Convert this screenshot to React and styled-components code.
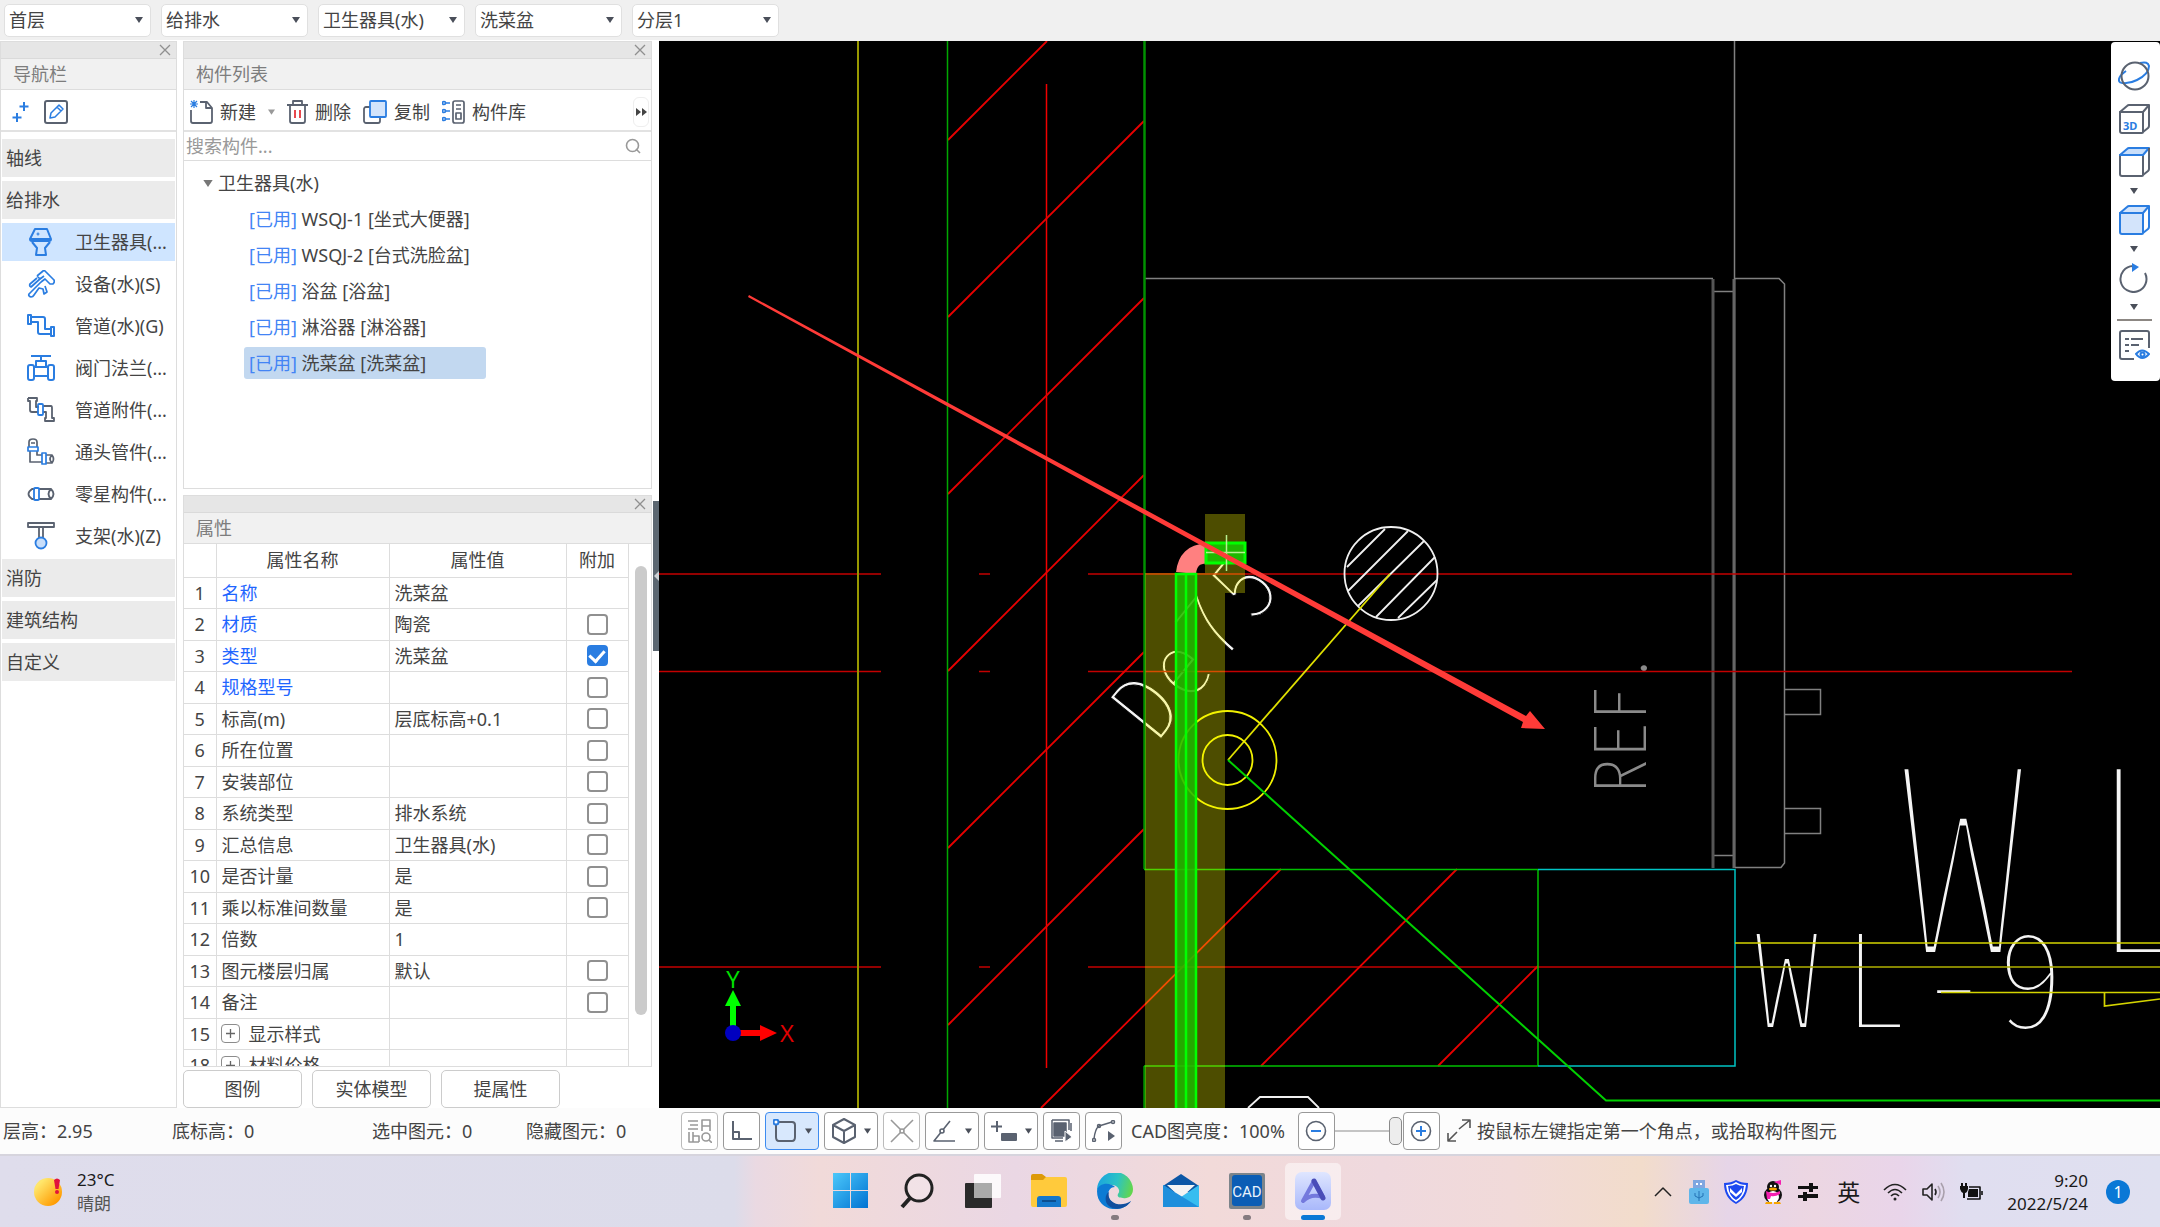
import React from "react";
import styled, { createGlobalStyle } from "styled-components";

const GlobalStyle = createGlobalStyle`
  * {
    box-sizing: border-box;
  }
  body {
    background-color: #fcfcfc;
    color: #444;
    font-family: "Noto Sans", "Noto Sans CJK SC", sans-serif;
    font-size: 18px;
    line-height: 24px;
    margin: 0;
    overflow: hidden;
  }
  button, input, select {
    color: inherit;
    font: inherit;
    margin: 0;
  }
  svg {
    display: block;
    flex: none;
  }
`;

const Page = styled.div`
  display: flex;
  flex-direction: column;
  height: 100vh;
`;

/* ---------- top bar ---------- */

const TopBar = styled.header`
  align-items: center;
  background-color: #f0f0f0;
  display: flex;
  flex: none;
  gap: 10px;
  height: 40px;
  padding: 0 4px;
`;

const SelectBox = styled.label`
  align-items: center;
  background-color: #fff;
  border: 1px solid #e0e0e0;
  border-radius: 5px;
  display: flex;
  height: 33px;
  padding-right: 7px;
  width: 147px;

  & select {
    appearance: none;
    background: none;
    border: 0;
    flex: 1;
    min-width: 0;
    outline: 0;
    padding: 0 4px;
  }
`;

/* ---------- docked panels ---------- */

const Main = styled.main`
  background-color: #fff;
  display: flex;
  flex: 1;
  min-height: 0;
`;

const PanelStack = styled.div`
  display: flex;
  flex: none;
  flex-direction: column;
  gap: 6px;
  margin-left: 6px;
  padding-top: 1px;
  width: 469px;
`;

const Panel = styled.section`
  border: 1px solid #ddd;
  display: flex;
  flex: ${(p) => p.$basis || "1 1 0"};
  flex-direction: column;
  min-height: 0;
`;

const NavPanel = styled(Panel)`
  flex: none;
  margin-top: 1px;
  width: 177px;
`;

const PanelStrip = styled.div`
  align-items: center;
  background-color: #e6e6e6;
  border-bottom: 1px solid #dadada;
  display: flex;
  flex: none;
  height: 17px;
  justify-content: flex-end;
  padding-right: 5px;
`;

const CloseButton = styled.button`
  background: none;
  border: 0;
  padding: 0;
`;

const PanelTitle = styled.h2`
  background-color: #f1f1f1;
  border-bottom: 1px solid #ddd;
  color: #7d7d7d;
  flex: none;
  font-size: 18px;
  font-weight: 400;
  line-height: 30px;
  margin: 0;
  padding-left: 12px;
`;

const PanelTools = styled.div`
  align-items: center;
  border-bottom: 2px solid #e2e2e2;
  display: flex;
  flex: none;
  gap: ${(p) => p.$gap}px;
  height: 42px;
  padding: 4px 2px 0 ${(p) => p.$left}px;
`;

const ToolButton = styled.button`
  align-items: center;
  background: none;
  border: 0;
  display: flex;
  gap: 7px;
  padding: 0;
`;

const MoreButton = styled(ToolButton)`
  border: 1px solid #eee;
  border-radius: 6px;
  height: 30px;
  justify-content: center;
  margin-left: auto;
  width: 16px;
`;

const NavList = styled.nav`
  display: flex;
  flex-direction: column;
  gap: 4px;
  padding: 7px 1px;
`;

const NavGroup = styled.button`
  background-color: #ebebeb;
  border: 0;
  height: 38px;
  padding: 0 4px;
  text-align: left;
`;

const NavItem = styled.button`
  align-items: center;
  background-color: ${(p) => (p.$active ? "#cfe5ff" : "#fff")};
  border: 0;
  display: flex;
  gap: 20px;
  height: 38px;
  padding: 0 0 0 25px;
  white-space: nowrap;
`;

const SearchBox = styled.label`
  align-items: center;
  border-bottom: 1px solid #ddd;
  display: flex;
  flex: none;
  height: 29px;
  padding-right: 10px;

  & input {
    background: none;
    border: 0;
    flex: 1;
    height: 26px;
    outline: 0;
    padding: 0 2px;
  }
  & input::placeholder {
    color: #999;
  }
`;

const Tree = styled.div`
  display: flex;
  flex-direction: column;
  gap: 4px;
  padding: 6px 60px 0 19px;
`;

const TreeRoot = styled.div`
  align-items: center;
  display: flex;
  gap: 5px;
  height: 32px;
`;

const TreeItem = styled.button`
  align-self: flex-start;
  background-color: ${(p) => (p.$active ? "#c2d8f0" : "transparent")};
  border: 0;
  border-radius: 3px;
  height: 32px;
  margin-left: 41px;
  min-width: ${(p) => (p.$active ? "242px" : "0")};
  padding: 0 5px;
  text-align: left;
  white-space: pre;

  & span {
    color: #4384f5;
  }
`;

/* ---------- property table ---------- */

const TableArea = styled.div`
  display: flex;
  flex: 1;
  min-height: 0;
  overflow: hidden;
`;

const PropTable = styled.table`
  border-collapse: collapse;
  height: min-content;
  table-layout: fixed;
  width: 444px;

  & th, & td {
    border-bottom: 1px solid #ddd;
    border-right: 1px solid #ddd;
    height: 31px;
    overflow: hidden;
    padding: 0 0 0 5px;
    text-align: left;
    white-space: nowrap;
  }
  & tbody tr:nth-child(even) td {
    height: 32px;
  }
  & thead th {
    font-weight: 400;
    height: 33px;
    padding: 0;
    text-align: center;
  }
  & td:first-child, & td:last-child {
    padding: 0;
    text-align: center;
  }
`;

const PropName = styled.div`
  align-items: center;
  color: ${(p) => (p.$blue ? "#1f66ff" : "inherit")};
  display: flex;
  gap: 9px;
`;

const ExpandButton = styled.button`
  align-items: center;
  background-color: #fff;
  border: 1px solid #8c8c8c;
  border-radius: 4px;
  display: flex;
  height: 19px;
  justify-content: center;
  margin-left: -1px;
  padding: 0;
  width: 19px;
`;

const CheckBox = styled.input`
  appearance: none;
  background-color: #fff;
  border: 2px solid #909090;
  border-radius: 4px;
  display: block;
  height: 21px;
  margin: 0 auto;
  width: 21px;

  &:checked {
    background-color: #2a7de1;
    border-color: #2a7de1;
  }
  &:checked::after {
    border: solid #fff;
    border-width: 0 3px 3px 0;
    content: "";
    display: block;
    height: 12px;
    margin: 0 auto;
    transform: rotate(42deg);
    width: 7px;
  }
`;

const ScrollTrack = styled.div`
  flex: 1;
  padding: 22px 0 51px 6px;
`;

const ScrollThumb = styled.div`
  background-color: #cbcbcb;
  border-radius: 6px;
  height: 100%;
  width: 12px;
`;

const ButtonRow = styled.div`
  display: flex;
  flex: none;
  gap: 10px;
  margin: -3px 0 0;
`;

const FlatButton = styled.button`
  background-color: #fff;
  border: 1px solid #ccc;
  border-radius: 5px;
  height: 38px;
  padding: 0;
  width: 119px;
`;

const Splitter = styled.div`
  flex: none;
  padding: 461px 0 0 1px;
  width: 7px;
`;

const SplitterGrip = styled.button`
  align-items: center;
  background-color: #5c6771;
  border: 0;
  display: flex;
  height: 150px;
  justify-content: flex-end;
  padding: 0;
  width: 6px;
`;

/* ---------- drawing area ---------- */

const CanvasArea = styled.div`
  background-color: #000;
  border-top: 1px solid #eee;
  flex: 1;
  min-width: 0;
  position: relative;
`;

const Drawing = styled.svg`
  height: 100%;
  left: 0;
  position: absolute;
  top: 0;
  width: 100%;
`;

const ViewBar = styled.div`
  align-items: center;
  background-color: #fff;
  border-radius: 4px;
  display: flex;
  flex-direction: column;
  gap: 13px;
  padding: 19px 3px 21px 0;
  position: absolute;
  right: 0;
  top: 1px;
  width: 49px;
`;

const ViewGroup = styled.div`
  align-items: center;
  display: flex;
  flex-direction: column;
  gap: 11px;
  margin-bottom: -2px;
`;

const IconButton = styled.button`
  background: none;
  border: 0;
  display: block;
  padding: 0;
`;

const ViewRule = styled.hr`
  border: 0;
  border-top: 2px solid #8c8783;
  margin: -2px 0 -4px;
  width: 35px;
`;

/* ---------- status bar ---------- */

const StatusBar = styled.footer`
  align-items: center;
  background-color: #fcfcfc;
  border-bottom: 2px solid #d6d4dd;
  display: flex;
  flex: none;
  height: 48px;
  white-space: nowrap;
`;

const StatusInfo = styled.div`
  display: grid;
  flex: none;
  grid-template-columns: 169px 200px 154px 1fr;
  padding-left: 3px;
  width: 681px;
`;

const StatusTools = styled.div`
  align-items: center;
  display: flex;
  gap: 5px;
`;

const StatusButton = styled.button`
  align-items: center;
  background-color: ${(p) => (p.$active ? "#d8e8fd" : "#fff")};
  border: 1px solid ${(p) => (p.$active ? "#3d8bf0" : p.$dim ? "#bbb" : "#999")};
  border-radius: 4px;
  display: flex;
  gap: 8px;
  height: 38px;
  justify-content: center;
  padding: 0;
  width: ${(p) => (p.$wide ? 54 : 37)}px;
`;

const StatusLabel = styled.span`
  margin: 0 8px 0 4px;
`;

const BrightSlider = styled.input`
  appearance: none;
  background: linear-gradient(#c4c4c4, #c4c4c4) center / 100% 2px no-repeat;
  height: 28px;
  margin: 0 -4px 0 -5px;
  width: 67px;

  &::-webkit-slider-thumb {
    appearance: none;
    background-color: #ededed;
    border: 1px solid #8a8a8a;
    border-radius: 5px;
    height: 28px;
    width: 13px;
  }
`;

/* ---------- task bar ---------- */

const TaskBar = styled.div`
  align-items: center;
  background: linear-gradient(
    90deg, #dfddec 0%, #dcdcea 34%, #ead9e2 35%, #f1dad9 38%, #ead7e4 47%,
    #f2dad9 56%, #efd9de 64%, #f1dad9 70%, #f2dccb 76%, #e6d5e8 80%,
    #ecd6e2 84%, #e9d5ea 88%, #e0def0 91%, #dfe0f0 100%
  );
  color: #1a1a1a;
  display: flex;
  flex: none;
  height: 71px;
`;

const Weather = styled.div`
  align-items: center;
  display: flex;
  flex: 1;
  gap: 13px;
  padding-left: 33px;

  & p {
    font-size: 17px;
    margin: 0;
  }
  & p + p {
    color: #555;
  }
`;

const Dock = styled.div`
  align-items: center;
  display: flex;
  gap: 10px;
`;

const DockButton = styled.button`
  align-items: center;
  background-color: ${(p) => (p.$active ? "rgba(255, 255, 255, 0.5)" : "transparent")};
  border: 0;
  border-radius: 5px;
  display: flex;
  height: 57px;
  justify-content: center;
  padding: 0 0 2px;
  position: relative;
  width: 56px;

  &::after {
    background-color: ${(p) => (p.$active ? "#0a78d6" : "#857b80")};
    border-radius: 3px;
    bottom: 0;
    content: "";
    display: ${(p) => (p.$active || p.$open ? "block" : "none")};
    height: 5px;
    position: absolute;
    width: ${(p) => (p.$active ? 24 : 8)}px;
  }
`;

const Tray = styled.div`
  align-items: center;
  display: flex;
  flex: 1;
  gap: 15px;
  justify-content: flex-end;
  padding-right: 30px;
`;

const InputMode = styled.span`
  font-size: 23px;
  margin: 0 8px 0 4px;
`;

const Clock = styled.div`
  font-size: 17px;
  line-height: 23px;
  margin-left: 8px;
  text-align: right;
`;

const Badge = styled.span`
  background-color: #0a78d6;
  border-radius: 50%;
  color: #fff;
  font-size: 16px;
  height: 24px;
  line-height: 24px;
  margin-left: 3px;
  text-align: center;
  width: 24px;
`;

/* ---------- icons ---------- */

const BLUE = "#2a7de1";
const SLATE = "#5a6270";

const Icon = ({ w = 28, h = 28, color = BLUE, width = 2, children }) => (
  <svg
    width={w}
    height={h}
    viewBox={`0 0 ${w} ${h}`}
    fill="none"
    stroke={color}
    strokeWidth={width}
    strokeLinejoin="round"
    aria-hidden="true"
  >
    {children}
  </svg>
);

const Caret = ({ color = "#4a4f5a", w = 8, h = 6 }) => (
  <svg width={w} height={h} viewBox="0 0 8 6" aria-hidden="true">
    <path d="M0 0h8L4 6z" fill={color} />
  </svg>
);

const Cross = () => (
  <Icon w={12} h={12} color="#8f8f8f" width={1.3}>
    <path d="M1 1l10 10M11 1L1 11" />
  </Icon>
);

const navIcons = {
  toilet: (
    <Icon>
      <path d="M8 1h12l4 10q0 2-2 2H5q-2 0-2-2zM3 11h21M5 14l5 6-1 7h10l-1-7 5-6" />
      <path d="M9.500 6h3M11 4.500v3" strokeWidth="1.200" />
    </Icon>
  ),
  device: (
    <Icon width={1.7}>
      <path d="M10 6l6-5q1-1 2 0l9 9q1 2-1 4h-3l-5-5-4 3M10 6l3 3 4-3M10 8L3 14q-1 2 1 3l10-9M14 12L2 24q-1 2 2 3 2 0 3-2l5-7 4 1 1 5 3-2-2-6" />
    </Icon>
  ),
  pipe: (
    <Icon>
      <path d="M1 3h3v9H1zM24 15h3v9h-3zM4 5h12q2 0 2 2v10h6M4 10h7v10q0 2 2 2h11" />
    </Icon>
  ),
  valve: (
    <Icon>
      <path d="M4 2h20M14 2v5M9 7h10v6H9zM7 13h14M7 22h14" />
      <rect x="1" y="11" width="6" height="15" rx="2" />
      <rect x="21" y="11" width="6" height="15" rx="2" />
    </Icon>
  ),
  fitting: (
    <Icon color={SLATE} width={1.8}>
      <path d="M1 2h9v3H9v6h3M1 2v3h2v9q0 2 2 2h6M16 10h8q1 0 1 2v10h2v3h-9v-3h1v-6h-3" />
      <rect x="11" y="8" width="5" height="11" rx="1" stroke={BLUE} />
    </Icon>
  ),
  joint: (
    <Icon color={SLATE} width={1.7}>
      <path d="M2 9V4q0-3 4-3t4 3v5M4 5h4M3 13v11h12M10 13v4h5M19 17h6q3 4 0 8h-6M25 17q-4 4 0 8" />
      <path d="M1 9h10v4H1zM15 15h4v11h-4z" stroke={BLUE} />
    </Icon>
  ),
  part: (
    <Icon color={SLATE} width={1.8}>
      <path d="M8 9H5q-7 5 0 10h3M12 9h12q5 5 0 10H12M24 9q-5 5 0 10" />
      <rect x="7" y="8" width="5" height="12" rx="1" stroke={BLUE} />
    </Icon>
  ),
  bracket: (
    <Icon color={SLATE} width={1.8}>
      <path d="M1 1h26v4H1zM12 5v11M16 5v11" />
      <circle cx="14" cy="21" r="5.500" fill="#c8defa" stroke={BLUE} />
    </Icon>
  ),
};

const Cube = ({ top, front, all, children }) => (
  <Icon w={31} h={30} color={all ? BLUE : SLATE}>
    <path d="M1 8h23v20q0 1-1 1H3q-2 0-2-2z" fill={front || "none"} />
    <path d="M1 8l7-6q1-1 2-1h20l-6 7z" fill={top || "none"} stroke={top ? BLUE : SLATE} />
    <path d="M24 28l5-4q1-1 1-2V1" />
    {children}
  </Icon>
);

/* ---------- data ---------- */

const filters = ["首层", "给排水", "卫生器具(水)", "洗菜盆", "分层1"];

const navItems = [
  ["toilet", "卫生器具(..."],
  ["device", "设备(水)(S)"],
  ["pipe", "管道(水)(G)"],
  ["valve", "阀门法兰(..."],
  ["fitting", "管道附件(..."],
  ["joint", "通头管件(..."],
  ["part", "零星构件(..."],
  ["bracket", "支架(水)(Z)"],
];

const components = [
  "WSQJ-1 [坐式大便器]",
  "WSQJ-2 [台式洗脸盆]",
  "浴盆 [浴盆]",
  "淋浴器 [淋浴器]",
  "洗菜盆 [洗菜盆]",
];

const props = [
  { id: 1, name: "名称", value: "洗菜盆", blue: true },
  { id: 2, name: "材质", value: "陶瓷", blue: true, check: true },
  { id: 3, name: "类型", value: "洗菜盆", blue: true, check: true, on: true },
  { id: 4, name: "规格型号", value: "", blue: true, check: true },
  { id: 5, name: "标高(m)", value: "层底标高+0.1", check: true },
  { id: 6, name: "所在位置", value: "", check: true },
  { id: 7, name: "安装部位", value: "", check: true },
  { id: 8, name: "系统类型", value: "排水系统", check: true },
  { id: 9, name: "汇总信息", value: "卫生器具(水)", check: true },
  { id: 10, name: "是否计量", value: "是", check: true },
  { id: 11, name: "乘以标准间数量", value: "是", check: true },
  { id: 12, name: "倍数", value: "1" },
  { id: 13, name: "图元楼层归属", value: "默认", check: true },
  { id: 14, name: "备注", value: "", check: true },
  { id: 15, name: "显示样式", value: "", group: true },
  { id: 18, name: "材料价格", value: "", group: true },
];

/* ---------- sections ---------- */

function Filters() {
  return (
    <TopBar>
      {filters.map((f) => (
        <SelectBox key={f}>
          <select aria-label={f} defaultValue={f}>
            <option>{f}</option>
          </select>
          <Caret />
        </SelectBox>
      ))}
    </TopBar>
  );
}

function PanelHead({ title }) {
  return (
    <>
      <PanelStrip>
        <CloseButton aria-label="关闭">
          <Cross />
        </CloseButton>
      </PanelStrip>
      <PanelTitle>{title}</PanelTitle>
    </>
  );
}

function Navigator() {
  return (
    <NavPanel>
      <PanelHead title="导航栏" />
      <PanelTools $left={11} $gap={14}>
        <IconButton aria-label="添加">
          <Icon w={18} h={22}>
            <path d="M12 1v9M7.500 5.500h9M5 12v9M.500 16.500h9" />
          </Icon>
        </IconButton>
        <IconButton aria-label="编辑">
          <Icon w={24} h={24} color={SLATE}>
            <rect x="1" y="1" width="22" height="22" rx="2" />
            <path d="M6 18l1-5 8-8 4 4-8 8zM13 7l4 4" stroke={BLUE} strokeWidth="1.500" />
          </Icon>
        </IconButton>
      </PanelTools>
      <NavList>
        <NavGroup>轴线</NavGroup>
        <NavGroup>给排水</NavGroup>
        {navItems.map(([icon, label], i) => (
          <NavItem key={icon} $active={i === 0}>
            {navIcons[icon]}
            {label}
          </NavItem>
        ))}
        <NavGroup>消防</NavGroup>
        <NavGroup>建筑结构</NavGroup>
        <NavGroup>自定义</NavGroup>
      </NavList>
    </NavPanel>
  );
}

function ComponentList() {
  return (
    <Panel $basis="0 0 448px">
      <PanelHead title="构件列表" />
      <PanelTools $left={6} $gap={12}>
        <ToolButton>
          <Icon w={23} h={24} color={SLATE} width={1.8}>
            <path d="M1 10v11q0 2 2 2h17q2 0 2-2V8l-5-6h-7M16 2v6h6" />
            <path d="M1 1l6 6M7 1L1 7M4 0v8M0 4h8" stroke={BLUE} strokeWidth="1.200" />
          </Icon>
          新建
        </ToolButton>
        <Caret color="#999" w={7} h={6} />
        <ToolButton>
          <Icon w={21} h={24} color={SLATE} width={1.8}>
            <path d="M0 5h21M6 5V1h9v4M3 5v16q0 2 2 2h11q2 0 2-2V5" />
            <path d="M8 10v8M13 10v8" stroke="#e5353b" />
          </Icon>
          删除
        </ToolButton>
        <ToolButton>
          <Icon w={24} h={24} color={SLATE} width={1.8}>
            <rect x="1" y="7" width="16" height="16" rx="2" />
            <rect x="7" y="1" width="16" height="16" rx="1" fill="#d3e4fb" stroke={BLUE} />
          </Icon>
          复制
        </ToolButton>
        <ToolButton>
          <Icon w={23} h={24} color={SLATE} width={1.7}>
            <rect x="11" y="1" width="11" height="22" rx="2" />
            <path d="M14 5h5M14 9h5M14 13h5v6h-5z" />
            <path d="M3 3h5M3 11h5M3 19h5" stroke={BLUE} />
            <circle cx="2" cy="3" r="1.500" stroke={BLUE} />
            <circle cx="2" cy="11" r="1.500" stroke={BLUE} />
            <circle cx="2" cy="19" r="1.500" stroke={BLUE} />
          </Icon>
          构件库
        </ToolButton>
        <MoreButton aria-label="更多">
          <svg width="11" height="8" viewBox="0 0 11 8">
            <path d="M0 0l5 4-5 4zM6 0l5 4-5 4z" fill="#444" />
          </svg>
        </MoreButton>
      </PanelTools>
      <SearchBox>
        <input placeholder="搜索构件..." aria-label="搜索构件" />
        <Icon w={16} h={16} color="#999" width={1.6}>
          <circle cx="7.500" cy="7.500" r="6" />
          <path d="M11 11l4 4" />
        </Icon>
      </SearchBox>
      <Tree>
        <TreeRoot>
          <Caret color="#777" w={10} h={7} />
          卫生器具(水)
        </TreeRoot>
        {components.map((name, i) => (
          <TreeItem key={name} $active={i === 4}>
            <span>[已用]</span> {name}
          </TreeItem>
        ))}
      </Tree>
    </Panel>
  );
}

function Properties() {
  return (
    <>
      <Panel>
        <PanelHead title="属性" />
        <TableArea>
          <PropTable>
            <colgroup>
              <col style={{ width: 32 }} />
              <col style={{ width: 173 }} />
              <col style={{ width: 177 }} />
              <col style={{ width: 62 }} />
            </colgroup>
            <thead>
              <tr>
                <th />
                <th>属性名称</th>
                <th>属性值</th>
                <th>附加</th>
              </tr>
            </thead>
            <tbody>
              {props.map((p) => (
                <tr key={p.id}>
                  <td>{p.id}</td>
                  <td>
                    <PropName $blue={p.blue}>
                      {p.group && (
                        <ExpandButton aria-label={"展开" + p.name}>
                          <Icon w={9} h={9} color="#666" width={1.3}>
                            <path d="M4.500 0v9M0 4.500h9" />
                          </Icon>
                        </ExpandButton>
                      )}
                      {p.name}
                    </PropName>
                  </td>
                  <td>{p.value}</td>
                  <td>
                    {p.check && (
                      <CheckBox type="checkbox" defaultChecked={p.on} aria-label={p.name} />
                    )}
                  </td>
                </tr>
              ))}
            </tbody>
          </PropTable>
          <ScrollTrack>
            <ScrollThumb />
          </ScrollTrack>
        </TableArea>
      </Panel>
      <ButtonRow>
        <FlatButton>图例</FlatButton>
        <FlatButton>实体模型</FlatButton>
        <FlatButton>提属性</FlatButton>
      </ButtonRow>
    </>
  );
}

/* the black stroke trims the glyphs down to a pen-thin line */
const CadText = styled.text`
  fill: ${(p) => p.$ink || "#f4f4f4"};
  font-family: "Noto Sans CJK SC", sans-serif;
  font-feature-settings: "hwid";
  font-weight: 100;
  stroke: #000;
  stroke-width: ${(p) => p.$trim}px;
`;

function CadDrawing() {
  return (
    <Drawing viewBox="659 41 1501 1067" preserveAspectRatio="xMidYMid slice">
      <g fill="none" strokeWidth="1.500">
        {/* labels */}
        <CadText $trim={6} x="1898 2082" y="955" fontSize="260">WL</CadText>
        <CadText $trim={2} x="1754 1842 1921 1998" y="1028" fontSize="131">WL-9</CadText>
        <CadText $trim={1} x="-5 45 96 150" y="0" fontSize="90" transform="translate(1160 740) rotate(-51)">
          De75
        </CadText>
        <CadText $trim={0} $ink="#8a8a8a" x="0" y="0" fontSize="72" transform="translate(1646 794) rotate(-90)">
          REF.
        </CadText>

        {/* room outlines in grey */}
        <g stroke="#808080">
          <path d="M1734.500 41V868M1144 278.500H1713M1713 291.500H1734M1713 855.500H1734" />
          <path d="M1713 279V868" strokeWidth="3" stroke="#555" />
          <path d="M1734 279V868" strokeWidth="3" stroke="#666" />
          <path d="M1734 278.500H1779L1784.500 284V863L1781 867.500H1735" />
          <path d="M1785 689.500H1820.500V714.500H1785M1785 808.500H1820.500V833.500H1785" />
        </g>

        {/* axis lines */}
        <path
          d="M659 574H881M979 574H990M1088 574H2072M659 671.500H881M979 671.500H990M1088 671.500H2072M659 967H881M979 967H990M1088 967H1735"
          stroke="#c40000"
          strokeWidth="1.700"
        />
        <path d="M1046.500 84V1068" stroke="#f00000" />
        <path
          d="M948 140L1047 41M948 317L1144 121M948 494L1144 298M948 671L1144 475M948 848L1144 652M948 1025L1144 829M1041 1108L1281 869M1261 1066L1457 869M1438 1066L1538 966"
          stroke="#e80000"
          strokeWidth="1.800"
        />

        {/* walls */}
        <path d="M858 41V1108" stroke="#989800" strokeWidth="2" />
        <path d="M947.500 41V1108" stroke="#00a800" />
        <path d="M1144.500 41V869M1144.500 1066V1108" stroke="#009000" strokeWidth="2.500" />
        <path d="M1144 869.500H1538M1144 1066H1538M1538 869V1066" stroke="#00c000" />
        <path d="M1538 869.500H1735V1066H1538" stroke="#00c4c4" />

        {/* drains */}
        <path d="M1735 943H2160M1941 992.500H2160M2104.500 992V1006L2160 999" stroke="#d4d400" strokeWidth="1.700" />
        <path d="M1735 967H2160" stroke="#b0b000" strokeWidth="1.700" />
        <g stroke="#f0f0f0" strokeWidth="1.800">
          <circle cx="1391" cy="573.500" r="46.500" />
          <path d="M1347 567L1385 529M1348 591L1408 531M1358 606L1424 541M1376 617L1435 557M1398 618L1437 580" />
          <path d="M1248 1108L1260 1097H1308L1319 1108" />
        </g>
        <path d="M1390 574L1228 760" stroke="#e0e000" strokeWidth="1.800" />
        <circle cx="1227.500" cy="760" r="49" stroke="#f0f000" strokeWidth="1.800" />
        <circle cx="1227.500" cy="760" r="25" stroke="#f0f000" strokeWidth="1.800" />
        <path d="M1228 760L1606 1100.500H2160" stroke="#00d000" strokeWidth="2" />
      </g>

      {/* picked pipe */}
      <path d="M1145 573H1225V1108H1145zM1205 514H1245V593H1205z" fill="#ffff00" fillOpacity="0.300" />
      <path d="M1186 573Q1188 554 1206 553.500" fill="none" stroke="#ff8080" strokeWidth="20" />
      <rect x="1175" y="573" width="22" height="535" fill="#1fb800" fillOpacity="0.850" />
      <path d="M1176 1108V574H1196V1108M1186 574V1108" fill="none" stroke="#00ff00" strokeWidth="2.500" />
      <rect x="1206" y="543" width="39" height="20" fill="#1fb800" stroke="#00ff00" strokeWidth="3" />
      <path d="M1226.500 535V571M1206 552.500H1245" stroke="#b8f090" strokeWidth="1.500" />

      {/* pick arrow */}
      <path d="M749 295L1526 716L1530 711L1545 729L1521 728L1523 722L748 297z" fill="#ff3b38" />

      {/* axis tripod */}
      <path d="M730 1026V1006H725L733 990L741 1006H736V1026z" fill="#00ff00" />
      <path d="M740 1030H760V1025L777 1033L760 1041V1036H740z" fill="#ff0000" />
      <circle cx="733" cy="1033" r="8" fill="#0000c0" />
      <text x="733" y="988" textAnchor="middle" fontSize="24" fill="#00e000" fontFamily="Open Sans">Y</text>
      <text x="787" y="1042" textAnchor="middle" fontSize="24" fill="#e00000" fontFamily="Open Sans">X</text>
    </Drawing>
  );
}

function ViewTools() {
  return (
    <ViewBar>
      <IconButton aria-label="动态观察">
        <Icon w={32} h={30} color={SLATE}>
          <path d="M8 22q-8 1-7-4 1-4 7-8M22 2q8-2 9 3 0 8-12 14-6 3-11 3" stroke={BLUE} />
          <circle cx="17" cy="15" r="13.500" />
        </Icon>
      </IconButton>
      <IconButton aria-label="三维">
        <Cube>
          <text x="4" y="26" fontSize="11" fontWeight="700" fill={BLUE} stroke="none">3D</text>
        </Cube>
      </IconButton>
      <ViewGroup>
        <IconButton aria-label="俯视">
          <Cube top="#c8defa" />
        </IconButton>
        <Caret w={10} h={6} />
      </ViewGroup>
      <ViewGroup>
        <IconButton aria-label="实体">
          <Cube top="#d3e4fb" front="#d3e4fb" all />
        </IconButton>
        <Caret w={10} h={6} />
      </ViewGroup>
      <ViewGroup>
        <IconButton aria-label="旋转">
          <Icon w={30} h={30} color={SLATE}>
            <path d="M14 3A13 13 0 1 0 26 10" />
            <path d="M13 0l7 4-7 5z" fill={BLUE} stroke="none" />
          </Icon>
        </IconButton>
        <Caret w={10} h={6} />
      </ViewGroup>
      <ViewRule />
      <IconButton aria-label="显示设置">
        <Icon w={31} h={30} color={SLATE}>
          <path d="M15 29H3q-2 0-2-2V3q0-2 2-2h25q2 0 2 2v15M6 9h4M12 9h12M6 15h4M12 15h8M6 21h4" />
          <path d="M17 24q6-7 13 0-7 8-13 0z" stroke={BLUE} />
          <circle cx="23.500" cy="24.500" r="2" stroke={BLUE} />
        </Icon>
      </IconButton>
    </ViewBar>
  );
}

function Status() {
  return (
    <StatusBar>
      <StatusInfo>
        <span>层高：2.95</span>
        <span>底标高：0</span>
        <span>选中图元：0</span>
        <span>隐藏图元：0</span>
      </StatusInfo>
      <StatusTools>
        <StatusButton $dim aria-label="查找图元">
          <Icon w={24} h={24} color="#999" width={1.6}>
            <path d="M0 2h10M2 6h8M0 10h10M14 12V1h8v11M14 7h8M1 13v10h10M5 13v10M5 17h6v6" />
            <circle cx="18" cy="18" r="4" />
            <path d="M21 21l3 3" />
          </Icon>
        </StatusButton>
        <StatusButton aria-label="正交">
          <Icon w={22} h={20} color={SLATE}>
            <path d="M2 0v18h19M2 11h6v7" />
          </Icon>
        </StatusButton>
        <StatusButton $wide $active aria-label="框选">
          <Icon w={24} h={24} color={SLATE}>
            <path d="M6 3h13q3 0 3 3v12q0 4-3 4H6q-3 0-3-4V6" />
            <circle cx="3" cy="3" r="2.500" stroke={BLUE} fill="#fff" />
          </Icon>
          <Caret w={7} />
        </StatusButton>
        <StatusButton $wide aria-label="视图">
          <Icon w={24} h={26} color={SLATE}>
            <path d="M12 1l11 6v12l-11 6-11-6V7zM1 7l11 6 11-6M12 13v12" />
          </Icon>
          <Caret w={7} />
        </StatusButton>
        <StatusButton $dim aria-label="交点">
          <Icon w={24} h={24} color="#999" width={1.6}>
            <path d="M1 1l22 22M23 1L1 23" />
            <circle cx="12" cy="12" r="2" fill="#fff" />
          </Icon>
        </StatusButton>
        <StatusButton $wide aria-label="角度">
          <Icon w={24} h={22} color={SLATE} width={1.6}>
            <path d="M17 1L1 21h21" />
            <circle cx="9" cy="11" r="2" fill="#fff" />
          </Icon>
          <Caret w={7} />
        </StatusButton>
        <StatusButton $wide aria-label="偏移">
          <Icon w={26} h={20} color={SLATE}>
            <path d="M6 0v11M0 5.500h11" />
            <rect x="11" y="13" width="14" height="6" fill={SLATE} />
          </Icon>
          <Caret w={7} />
        </StatusButton>
        <StatusButton aria-label="选择">
          <Icon w={22} h={24} color={SLATE} width={1.500}>
            <rect x="3" y="4" width="12" height="13" fill={SLATE} />
            <path d="M1 1h17v10M1 1v18h11M4 22h8M20 4v8" />
            <path d="M14 12v11l7-5z" fill={SLATE} stroke="#fff" strokeWidth="1" />
          </Icon>
        </StatusButton>
        <StatusButton aria-label="折线">
          <Icon w={24} h={22} color={SLATE} width={1.500}>
            <path d="M2 19q1-10 5-13L20 2" />
            <circle cx="2" cy="20" r="1.500" />
            <circle cx="7" cy="6" r="1.500" />
            <circle cx="21" cy="2" r="1.500" />
            <path d="M16 11v10l7-5z" fill={SLATE} stroke="none" />
          </Icon>
        </StatusButton>
        <StatusLabel>CAD图亮度：100%</StatusLabel>
        <StatusButton aria-label="调暗">
          <Icon w={22} h={22} color={SLATE} width={1.6}>
            <circle cx="11" cy="11" r="9.500" />
            <path d="M6 11h10" stroke={BLUE} strokeWidth="2" />
          </Icon>
        </StatusButton>
        <BrightSlider type="range" defaultValue="100" aria-label="CAD图亮度" />
        <StatusButton aria-label="调亮">
          <Icon w={22} h={22} color={SLATE} width={1.6}>
            <circle cx="11" cy="11" r="9.500" />
            <path d="M6 11h10M11 6v10" stroke={BLUE} strokeWidth="2" />
          </Icon>
        </StatusButton>
        <Icon w={27} h={24} color="#555" width={1.6}>
          <path d="M14 10L25 1M17 1h8v8M12 13L3 22M3 14v8h8" />
        </Icon>
        <span>按鼠标左键指定第一个角点，或拾取构件图元</span>
      </StatusTools>
    </StatusBar>
  );
}

function Taskbar() {
  return (
    <TaskBar>
      <Weather>
        <svg width="31" height="30" viewBox="0 0 31 30">
          <defs>
            <linearGradient id="sun" x1="0" y1="0" x2="1" y2="1">
              <stop offset="0.200" stopColor="#ffe66b" />
              <stop offset="0.850" stopColor="#ff9a00" />
            </linearGradient>
          </defs>
          <circle cx="15" cy="15" r="14" fill="url(#sun)" />
          <path d="M21 3q3-3 6 0l-1.500 9h-3z" fill="#e1123c" />
          <circle cx="24" cy="15" r="2" fill="#e1123c" />
        </svg>
        <div>
          <p>23°C</p>
          <p>晴朗</p>
        </div>
      </Weather>
      <Dock>
        <DockButton aria-label="开始">
          <svg width="36" height="36" viewBox="0 0 36 36">
            <defs>
              <linearGradient id="win" x1="0" y1="0" x2="1" y2="1">
                <stop offset="0" stopColor="#4cc8fa" />
                <stop offset="1" stopColor="#0072d2" />
              </linearGradient>
            </defs>
            <path d="M0 0h17v17H0zM18 0h17v17H18zM0 18h17v17H0zM18 18h17v17H18z" fill="url(#win)" />
          </svg>
        </DockButton>
        <DockButton aria-label="搜索">
          <Icon w={34} h={36} color="#222" width={3}>
            <circle cx="19" cy="15" r="13" fill="#ffffff40" />
            <path d="M11 24L2 34" strokeWidth="4" />
          </Icon>
        </DockButton>
        <DockButton aria-label="任务视图">
          <svg width="36" height="36" viewBox="0 0 36 36">
            <rect y="10" width="27" height="25" rx="1" fill="#2a2a2a" />
            <rect x="9" y="1" width="27" height="24" rx="1" fill="#fff" fillOpacity="0.850" />
            <path d="M9 10h18v15H9z" fill="#aaa" />
          </svg>
        </DockButton>
        <DockButton aria-label="文件">
          <svg width="36" height="34" viewBox="0 0 36 34">
            <path d="M0 2q0-2 2-2h9l4 3h19v6H0z" fill="#dd9a08" />
            <path d="M0 6h12l3-3h19q2 0 2 2v26q0 2-2 2H2q-2 0-2-2z" fill="#ffca3c" />
            <path d="M6 33v-8q0-3 3-3h18q3 0 3 3v8z" fill="#1478cc" />
            <path d="M11 27h14" stroke="#0b4f91" strokeWidth="2" />
          </svg>
        </DockButton>
        <DockButton $open aria-label="浏览器">
          <svg width="36" height="36" viewBox="0 0 36 36">
            <defs>
              <linearGradient id="edge" x1="0" y1="0.300" x2="1" y2="0.500">
                <stop offset="0" stopColor="#1aa3e0" />
                <stop offset="0.550" stopColor="#2cc3c4" />
                <stop offset="1" stopColor="#62d64e" />
              </linearGradient>
            </defs>
            <path d="M0 18a18 18 0 0 1 36-2c0 7-5 10-10 9-5 0-6-2-5-4 3-3 0-9-6-9C7 11 1 14 0 18z" fill="url(#edge)" />
            <path d="M0 18c1-9 14-9 18-4-7 0-9 9-4 14 6 6 14 6 20 0-8 13-34 11-34-10z" fill="#0d7bd4" />
            <path d="M12 19c-3 9 10 17 22 9-5 8-16 10-22 5-5-4-4-12 0-14z" fill="#124f9e" />
          </svg>
        </DockButton>
        <DockButton aria-label="邮件">
          <svg width="36" height="34" viewBox="0 0 36 34">
            <path d="M0 12L18 0l18 12v6H0z" fill="#0c57a6" />
            <path d="M4 11h28L18 24z" fill="#f4f4f4" />
            <path d="M0 11l18 12 18-12v22H0z" fill="#37bdf0" />
            <path d="M0 11l36 22H0z" fill="#1e8fdc" />
          </svg>
        </DockButton>
        <DockButton $open aria-label="CAD">
          <svg width="36" height="36" viewBox="0 0 36 36">
            <rect width="36" height="36" rx="2" fill="#7c848b" />
            <rect x="3" y="2" width="30" height="31" rx="3" fill="#0b5db5" />
            <text x="18" y="24" textAnchor="middle" fontSize="15" fontFamily="Liberation Sans Narrow, Roboto" fill="#e8f2fc">CAD</text>
          </svg>
        </DockButton>
        <DockButton $active aria-label="算量">
          <svg width="36" height="38" viewBox="0 0 36 38">
            <defs>
              <linearGradient id="tile" x1="0" y1="0" x2="0" y2="1">
                <stop offset="0" stopColor="#dfe6ff" />
                <stop offset="1" stopColor="#a9b8fb" />
              </linearGradient>
            </defs>
            <rect width="36" height="38" rx="7" fill="url(#tile)" />
            <path d="M19 9L8 29q8-8 20-4z" fill="none" stroke="#7479dd" strokeWidth="4" strokeLinejoin="round" />
            <path d="M19 9l9 17" stroke="#4a4db8" strokeWidth="5" strokeLinecap="round" />
          </svg>
        </DockButton>
      </Dock>
      <Tray>
        <Icon w={20} h={11} color="#222" width={1.500}>
          <path d="M1 10l8-8 8 8" />
        </Icon>
        <svg width="20" height="24" viewBox="0 0 20 24">
          <rect x="4" width="12" height="9" fill="#7fa6e0" />
          <path d="M7 3h2v2H7zM11 3h2v2h-2z" fill="#fff" />
          <rect y="8" width="20" height="16" rx="2" fill="#5fb6ea" />
          <path d="M10 11v10M6 13v3l4 2M14 13v3l-4 2" fill="none" stroke="#2473b5" />
        </svg>
        <svg width="24" height="24" viewBox="0 0 24 24">
          <path d="M12 0q5 3 12 3 0 15-12 21Q0 18 0 3q7 0 12-3z" fill="#1d49f0" />
          <path d="M12 2q4 3 10 3-1 12-10 17Q3 17 2 5q6 0 10-3z" fill="#fff" />
          <path d="M12 4q3 2 8 2-1 10-8 14Q5 16 4 6q5 0 8-2z" fill="#1d49f0" />
          <path d="M6 8l6 6 6-6v4l-6 5-6-5z" fill="#fff" />
        </svg>
        <svg width="20" height="24" viewBox="0 0 20 24">
          <ellipse cx="10" cy="15" rx="9" ry="8" fill="#111" />
          <circle cx="10" cy="7" r="6" fill="#111" />
          <ellipse cx="10" cy="17" rx="6" ry="6" fill="#fff" />
          <path d="M3 11q7 4 14 0v3q-5 3-9 2l-1 3H4z" fill="#f51fb0" />
          <path d="M11 2l7-2v5z" fill="#f51fb0" />
          <ellipse cx="10" cy="9" rx="4" ry="1.500" fill="#f7a600" />
          <circle cx="8" cy="6" r="1.200" fill="#fff" />
          <circle cx="12" cy="6" r="1.200" fill="#fff" />
          <path d="M3 22h6v2H2zM11 22h6l1 2h-7z" fill="#f7a600" />
        </svg>
        <svg width="20" height="18" viewBox="0 0 20 18">
          <path d="M0 3h11V0h4v3h5v3h-5v3h-4V6H0zM20 11H9V9H5v3H0v3h5v3h4v-3h11z" fill="#111" />
        </svg>
        <InputMode>英</InputMode>
        <Icon w={24} h={18} color="#222" width={1.600}>
          <path d="M1 7q11-11 22 0M5 10q7-7 14 0M8 13q4-4 8 0" />
          <circle cx="12" cy="16" r="1.500" fill="#222" stroke="none" />
        </Icon>
        <Icon w={23} h={20} color="#222" width={1.600}>
          <path d="M1 7h4l5-5v16l-5-5H1zM13 7q2 3 0 6" />
          <path d="M16 4q4 6 0 12M19 1q6 9 0 18" stroke="#a9a0ac" />
        </Icon>
        <Icon w={24} h={18} color="#111" width={1.600}>
          <path d="M7 16h13V4H9M22 8v4" />
          <path d="M9 6h9v8H8V9zM0 3h8v3q-1 4-3 4v5H3v-5Q1 9 0 6zM1 0h2v3H1zM5 0h2v3H5z" fill="#111" stroke="none" />
        </Icon>
        <Clock>
          9:20
          <br />
          2022/5/24
        </Clock>
        <Badge>1</Badge>
      </Tray>
    </TaskBar>
  );
}

export default function App() {
  return (
    <Page>
      <GlobalStyle />
      <Filters />
      <Main>
        <Navigator />
        <PanelStack>
          <ComponentList />
          <Properties />
        </PanelStack>
        <Splitter>
          <SplitterGrip aria-label="收起面板">
            <svg width="5" height="10" viewBox="0 0 5 10">
              <path d="M5 0v10L0 5z" fill="#ccd1d5" />
            </svg>
          </SplitterGrip>
        </Splitter>
        <CanvasArea>
          <CadDrawing />
          <ViewTools />
        </CanvasArea>
      </Main>
      <Status />
      <Taskbar />
    </Page>
  );
}
